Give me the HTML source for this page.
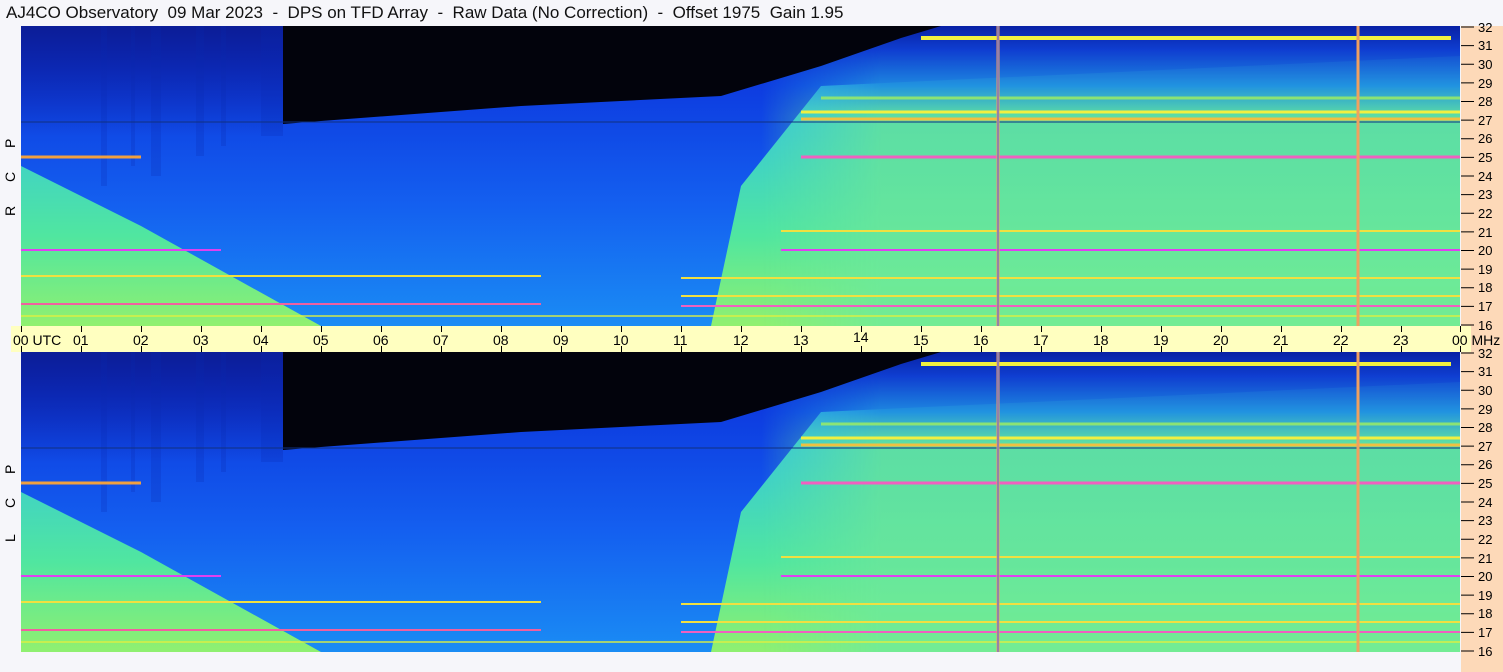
<!DOCTYPE html>
<html><head><meta charset="utf-8"><style>
html,body{margin:0;padding:0;width:1503px;height:672px;overflow:hidden;background:#f6f6fa;font-family:"Liberation Sans",sans-serif}
.t{position:absolute;left:6px;top:3px;font-size:17px;color:#111;white-space:pre}
.side{position:absolute;left:1461px;top:26px;width:42px;height:646px;background:#fdd9b8}
.band{position:absolute;left:11px;top:326px;width:1460px;height:26px;background:#ffffc0}
svg{position:absolute}
</style></head><body>
<div class="t">AJ4CO Observatory  09 Mar 2023  -  DPS on TFD Array  -  Raw Data (No Correction)  -  Offset 1975  Gain 1.95</div>
<div class="side"></div>
<div class="band"></div>
<svg width="1503" height="672" style="left:0;top:0">
<defs>
<linearGradient id="g" x1="0" y1="0" x2="0" y2="1"><stop offset="0" stop-color="#2a8cf0"/><stop offset="0.3" stop-color="#38c8d8"/><stop offset="0.7" stop-color="#50e6a0"/><stop offset="1" stop-color="#90f070"/></linearGradient>
<linearGradient id="b" x1="0" y1="0" x2="0" y2="1"><stop offset="0" stop-color="#0a2ad8"/><stop offset="0.6" stop-color="#1460f0"/><stop offset="1" stop-color="#1a8cf4"/></linearGradient>
<linearGradient id="top" x1="0" y1="0" x2="0" y2="1"><stop offset="0" stop-color="#0c1c90" stop-opacity=".9"/><stop offset="1" stop-color="#0c1c90" stop-opacity="0"/></linearGradient>
<linearGradient id="r" x1="0" y1="0" x2="0" y2="1"><stop offset="0" stop-color="#0820a0"/><stop offset="0.08" stop-color="#1040d0"/><stop offset="0.2" stop-color="#2090e0"/><stop offset="0.3" stop-color="#60e0a0"/><stop offset="1" stop-color="#70ec98"/></linearGradient>
<linearGradient id="fade" x1="0" y1="0" x2="1" y2="0"><stop offset="0" stop-color="#fff" stop-opacity="0"/><stop offset="1" stop-color="#fff" stop-opacity="1"/></linearGradient>
<mask id="m"><rect x="740" y="0" width="120" height="300" fill="url(#fade)"/><rect x="860" y="0" width="600" height="300" fill="#fff"/></mask>
<g id="p">
<rect x="0" y="0" width="1439" height="300" fill="url(#g)"/>
<polygon points="0,0 1439,0 1439,30 800,60 720,160 690,300 300,300 120,200 0,140" fill="url(#b)"/>
<rect x="0" y="0" width="262" height="110" fill="url(#top)"/>
<g fill="#0a2ab0" opacity=".22"><rect x="80" y="0" width="6" height="160"/><rect x="110" y="0" width="4" height="140"/><rect x="130" y="0" width="10" height="150"/><rect x="175" y="0" width="8" height="130"/><rect x="200" y="0" width="5" height="120"/><rect x="240" y="0" width="22" height="110"/></g>
<rect x="740" y="0" width="699" height="300" fill="url(#r)" opacity="0.9" mask="url(#m)"/>
<polygon points="262,0 920,0 880,12 800,40 700,70 500,80 300,95 262,98" fill="#02030c"/>
<g stroke-width="3">
<line x1="780" y1="86" x2="1439" y2="86" stroke="#f0f040"/>
<line x1="780" y1="93" x2="1439" y2="93" stroke="#f0c040"/>
<line x1="800" y1="72" x2="1439" y2="72" stroke="#a0f060" opacity=".8"/>
<line x1="0" y1="131" x2="120" y2="131" stroke="#f0a040"/>
<line x1="780" y1="131" x2="1439" y2="131" stroke="#f060c0"/>
<line x1="760" y1="224" x2="1439" y2="224" stroke="#e040f0" stroke-width="2"/>
<line x1="0" y1="224" x2="200" y2="224" stroke="#e040f0" stroke-width="2"/>
<line x1="760" y1="205" x2="1439" y2="205" stroke="#f0e040" stroke-width="2"/>
<line x1="0" y1="250" x2="520" y2="250" stroke="#f0e040" stroke-width="2"/>
<line x1="660" y1="252" x2="1439" y2="252" stroke="#f0e040" stroke-width="2"/>
<line x1="0" y1="278" x2="520" y2="278" stroke="#f060a0" stroke-width="2"/>
<line x1="660" y1="270" x2="1439" y2="270" stroke="#f0e040" stroke-width="2"/>
<line x1="660" y1="280" x2="1439" y2="280" stroke="#f060c0" stroke-width="2"/>
<line x1="0" y1="290" x2="1439" y2="290" stroke="#e0f040" stroke-width="2" opacity=".7"/>
<line x1="900" y1="12" x2="1430" y2="12" stroke="#f0f040" stroke-width="4"/>
<line x1="0" y1="96" x2="1439" y2="96" stroke="#103080" stroke-width="1"/>
</g>
<line x1="977" y1="0" x2="977" y2="300" stroke="#f0a060" stroke-width="3"/>
<line x1="977" y1="0" x2="977" y2="300" stroke="#4060f0" stroke-width="1"/>
<line x1="1337" y1="0" x2="1337" y2="300" stroke="#f0a060" stroke-width="3"/>
</g>
</defs>
<use href="#p" x="21" y="26"/>
<use href="#p" x="21" y="352"/>
<g stroke="#000" stroke-width="1">
<path d="M21.5 326v6M81.5 326v6M141.5 326v6M201.5 326v6M261.5 326v6M321.5 326v6M381.5 326v6M441.5 326v6M501.5 326v6M561.5 326v6M621.5 326v6M681.5 326v6M741.5 326v6M801.5 326v6M861.5 326v6M921.5 326v6M981.5 326v6M1041.5 326v6M1101.5 326v6M1161.5 326v6M1221.5 326v6M1281.5 326v6M1341.5 326v6M1401.5 326v6M1460.5 326v6"/>
<path d="M21.5 346v6M81.5 346v6M141.5 346v6M201.5 346v6M261.5 346v6M321.5 346v6M381.5 346v6M441.5 346v6M501.5 346v6M561.5 346v6M621.5 346v6M681.5 346v6M741.5 346v6M801.5 346v6M861.5 346v6M921.5 346v6M981.5 346v6M1041.5 346v6M1101.5 346v6M1161.5 346v6M1221.5 346v6M1281.5 346v6M1341.5 346v6M1401.5 346v6M1460.5 346v6"/>
<path d="M1461 27h13M1461 45.6h13M1461 64.3h13M1461 82.9h13M1461 101.5h13M1461 120.1h13M1461 138.8h13M1461 157.4h13M1461 176h13M1461 194.6h13M1461 213.3h13M1461 231.9h13M1461 250.5h13M1461 269.1h13M1461 287.8h13M1461 306.4h13M1461 325h13"/>
<path d="M1461 353h13M1461 371.6h13M1461 390.3h13M1461 408.9h13M1461 427.5h13M1461 446.1h13M1461 464.8h13M1461 483.4h13M1461 502h13M1461 520.6h13M1461 539.3h13M1461 557.9h13M1461 576.5h13M1461 595.1h13M1461 613.8h13M1461 632.4h13M1461 651h13"/>
</g>
<g font-family="Liberation Sans,sans-serif" font-size="14" fill="#000">
<text x="13" y="345">00  UTC</text>
<text x="73" y="345">01</text><text x="133" y="345">02</text><text x="193" y="345">03</text><text x="253" y="345">04</text><text x="313" y="345">05</text><text x="373" y="345">06</text><text x="433" y="345">07</text><text x="493" y="345">08</text><text x="553" y="345">09</text><text x="613" y="345">10</text><text x="673" y="345">11</text><text x="733" y="345">12</text><text x="793" y="345">13</text><text x="853" y="342">14</text><text x="913" y="345">15</text><text x="973" y="345">16</text><text x="1033" y="345">17</text><text x="1093" y="345">18</text><text x="1153" y="345">19</text><text x="1213" y="345">20</text><text x="1273" y="345">21</text><text x="1333" y="345">22</text><text x="1393" y="345">23</text><text x="1452" y="345">00 MHz</text>
<g transform="rotate(-90)"><text x="-148" y="15">P</text><text x="-182" y="15">C</text><text x="-216" y="15">R</text><text x="-474" y="15">P</text><text x="-508" y="15">C</text><text x="-542" y="15">L</text></g>
</g>
<g font-family="Liberation Sans,sans-serif" font-size="13" fill="#000">
<text x="1478" y="32">32</text><text x="1478" y="50">31</text><text x="1478" y="69">30</text><text x="1478" y="88">29</text><text x="1478" y="106">28</text><text x="1478" y="125">27</text><text x="1478" y="143">26</text><text x="1478" y="162">25</text><text x="1478" y="181">24</text><text x="1478" y="199">23</text><text x="1478" y="218">22</text><text x="1478" y="237">21</text><text x="1478" y="255">20</text><text x="1478" y="274">19</text><text x="1478" y="292">18</text><text x="1478" y="311">17</text><text x="1478" y="330">16</text>
<text x="1478" y="358">32</text><text x="1478" y="376">31</text><text x="1478" y="395">30</text><text x="1478" y="414">29</text><text x="1478" y="432">28</text><text x="1478" y="451">27</text><text x="1478" y="469">26</text><text x="1478" y="488">25</text><text x="1478" y="507">24</text><text x="1478" y="525">23</text><text x="1478" y="544">22</text><text x="1478" y="563">21</text><text x="1478" y="581">20</text><text x="1478" y="600">19</text><text x="1478" y="618">18</text><text x="1478" y="637">17</text><text x="1478" y="656">16</text>
</g>
</svg>
</body></html>
